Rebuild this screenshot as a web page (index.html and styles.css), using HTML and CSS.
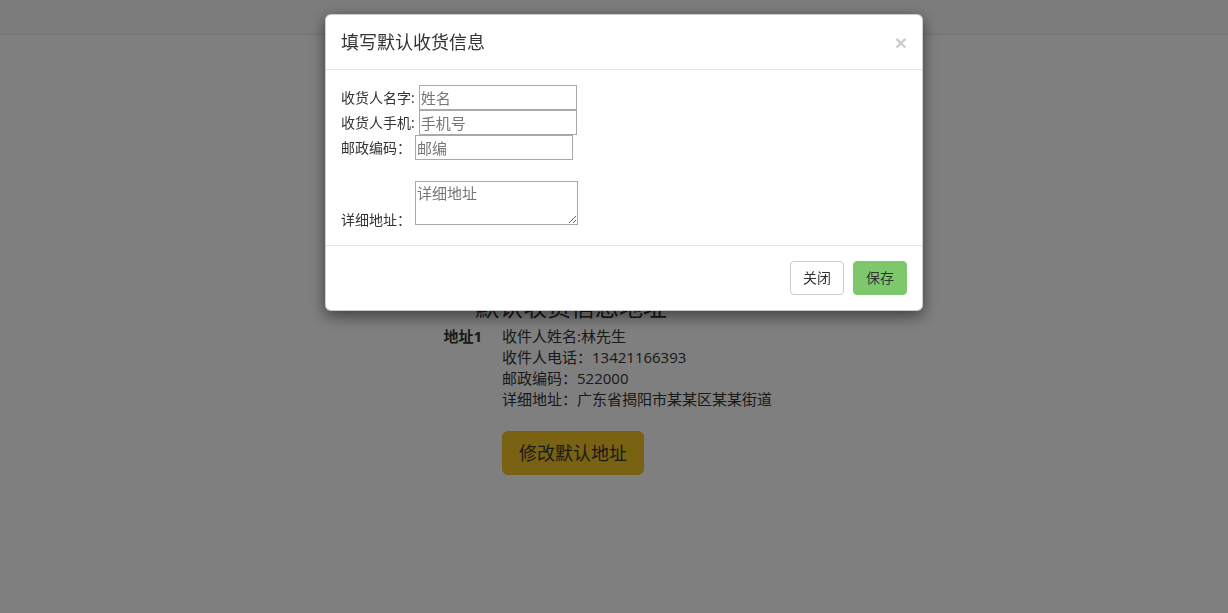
FILE: index.html
```html
<!DOCTYPE html>
<html lang="zh-CN">

<head>
  <meta charset="UTF-8">
  <meta name="viewport" content="width=device-width, initial-scale=1.0">
  <title>默认收货信息</title>
  <link rel="stylesheet" href="styles.css">
</head>

<body>
  <div class="navbar"></div>

  <!-- 页面内容 -->
  <div class="main">
    <h3 class="page-title">默认收货信息地址</h3>
    <div class="address">
      <div class="address-name">地址1</div>
      <div class="address-info">
        <p>收件人姓名:林先生</p>
        <p>收件人电话：13421166393</p>
        <p>邮政编码：522000</p>
        <p>详细地址：广东省揭阳市某某区某某街道</p>
        <button class="btn btn-warning btn-lg">修改默认地址</button>
      </div>
    </div>
  </div>

  <!-- 弹窗 -->
  <div class="modal-backdrop"></div>
  <div class="modal">
    <div class="modal-header">
      <h4 class="modal-title">填写默认收货信息</h4>
      <button class="close">&times;</button>
    </div>
    <div class="modal-body">
      <div class="field">
        <label>收货人名字:</label>
        <input type="text" placeholder="姓名">
      </div>
      <div class="field">
        <label>收货人手机:</label>
        <input type="text" placeholder="手机号">
      </div>
      <div class="field">
        <label>邮政编码：</label>
        <input type="text" placeholder="邮编">
      </div>
      <div class="field field-area">
        <label>详细地址：</label>
        <textarea placeholder="详细地址"></textarea>
      </div>
    </div>
    <div class="modal-footer">
      <button class="btn btn-default">关闭</button>
      <button class="btn btn-success">保存</button>
    </div>
  </div>
</body>

</html>
```

FILE: styles.css
```css
body {
  font-family: "Open Sans", "Noto Sans CJK SC", sans-serif;
  font-size: 14px;
  line-height: 20px;
  color: #333;
  background: #fff;
  margin: 0;
}

.navbar {
  height: 34px;
  background: #f8f8f8;
  border-bottom: 1px solid #e7e7e7;
}

.main {
  padding-left: 322px;
  font-size: 15px;
  line-height: 21px;
}

.page-title {
  margin: 259px 0 6px 153px;
  font-size: 24px;
  font-weight: 400;
  line-height: 26px;
}

.address {
  display: flex;
  gap: 20px;
}

.address-name {
  width: 160px;
  text-align: right;
  font-weight: bold;
}

.address-info p {
  margin: 0;
}

.btn {
  font-family: inherit;
  font-size: 14px;
  line-height: 20px;
  padding: 6px 12px;
  border: 1px solid transparent;
  border-radius: 4px;
  color: #333;
  cursor: pointer;
}

.btn-lg {
  font-size: 18px;
  line-height: 22px;
  padding: 10px 16px;
  border-radius: 6px;
  margin-top: 21px;
}

.btn-warning {
  background: #f3c624;
  border-color: #eec11e;
}

.btn-default {
  background: #fff;
  border-color: #ccc;
}

.btn-success {
  background: #7ec86c;
  border-color: #7ec86c;
}

.modal-backdrop {
  position: fixed;
  top: 0;
  left: 0;
  right: 0;
  bottom: 0;
  background: rgba(0, 0, 0, 0.5);
}

.modal {
  position: fixed;
  top: 14px;
  left: 325px;
  width: 598px;
  box-sizing: border-box;
  background: #fff;
  border: 1px solid rgba(0, 0, 0, 0.2);
  border-radius: 6px;
  box-shadow: 0 5px 15px rgba(0, 0, 0, 0.5);
}

.modal-header {
  display: flex;
  justify-content: space-between;
  align-items: center;
  padding: 15px;
  border-bottom: 1px solid #e5e5e5;
}

.modal-title {
  margin: 0;
  font-size: 18px;
  font-weight: 400;
  line-height: 24px;
}

.close {
  background: none;
  border: none;
  padding: 0;
  font-family: "Liberation Sans", sans-serif;
  font-size: 21px;
  font-weight: bold;
  line-height: 1;
  color: #000;
  opacity: 0.2;
  cursor: pointer;
}

.modal-body {
  padding: 15px;
}

.field {
  display: flex;
  align-items: center;
  gap: 4px;
}

.field label {
  line-height: 20px;
}

.field input {
  width: 158px;
  height: 25px;
  box-sizing: border-box;
  padding: 1px 1px;
  border: 1px solid #a9a9a9;
  font-family: inherit;
  font-size: 15px;
  color: #333;
}

.field-area {
  align-items: flex-end;
  margin-top: 21px;
}

.field-area textarea {
  width: 163px;
  height: 44px;
  box-sizing: border-box;
  margin-bottom: 5px;
  padding: 1px 1px;
  border: 1px solid #a9a9a9;
  font-family: inherit;
  font-size: 15px;
  line-height: 20px;
}

.field input::placeholder,
.field textarea::placeholder {
  color: #777;
}

.modal-footer {
  display: flex;
  justify-content: flex-end;
  gap: 9px;
  padding: 15px;
  border-top: 1px solid #e5e5e5;
}
```
